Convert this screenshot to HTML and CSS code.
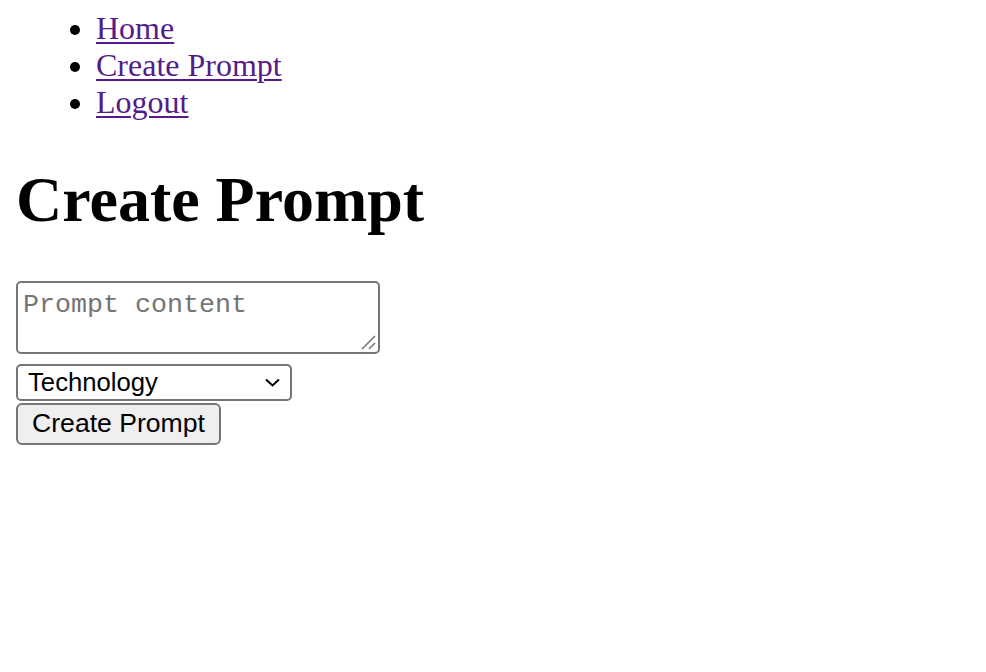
FILE: index.html
```html
<!DOCTYPE html>
<html lang="en">
<head>
<meta charset="utf-8">
<title>Create Prompt</title>
<link rel="stylesheet" href="styles.css">
</head>
<body>
<nav class="site-nav">
  <ul class="nav-list">
    <li class="nav-item"><a class="nav-link" href="#">Home</a></li>
    <li class="nav-item"><a class="nav-link" href="#">Create Prompt</a></li>
    <li class="nav-item"><a class="nav-link" href="#">Logout</a></li>
  </ul>
</nav>
<h1 class="page-title">Create Prompt</h1>
<form class="prompt-form">
  <textarea class="prompt-content" placeholder="Prompt content"></textarea>
  <select class="prompt-category">
    <option>Technology</option>
    <option>Science</option>
    <option>Art</option>
  </select>
  <button class="submit-button" type="submit">Create Prompt</button>
</form>
</body>
</html>
```
FILE: styles.css
```css
html, body {
  background: #ffffff;
}
body {
  margin: 0;
  padding: 10px 16px 16px;
  font-family: "Liberation Serif", "Times New Roman", serif;
  font-size: 32px;
  color: #000000;
}
.nav-list {
  margin: 0;
  padding-left: 80px;
  list-style: disc;
  line-height: 1.15;
}
.nav-link {
  color: #551a8b;
  text-decoration: underline;
  text-decoration-thickness: 2px;
  text-underline-offset: 3px;
}
.page-title {
  font-size: 64px;
  font-weight: bold;
  line-height: 1.15;
  margin: 43px 0 44px;
}
.prompt-form {
  display: flex;
  flex-direction: column;
  align-items: flex-start;
}
.prompt-content {
  box-sizing: border-box;
  width: 364px;
  height: 73px;
  margin: 0 0 10px;
  padding: 7px 5px 4px;
  border: 2px solid #767676;
  border-radius: 5px;
  font-family: "Liberation Mono", "Courier New", monospace;
  font-size: 26.67px;
  line-height: 1.15;
  color: #000000;
  resize: none;
  background: #ffffff url("data:image/svg+xml;utf8,<svg xmlns='http://www.w3.org/2000/svg' width='16' height='16'><path d='M2 15 L15 2 M9 15 L15 9' stroke='%23777' stroke-width='1.6' fill='none'/></svg>") no-repeat right 2px bottom 2px;
}
.prompt-content::placeholder {
  color: #757575;
}
.prompt-category {
  box-sizing: border-box;
  appearance: none;
  -webkit-appearance: none;
  width: 276px;
  height: 37px;
  margin: 0 0 2px;
  padding: 0 0 0 10px;
  border: 2px solid #767676;
  border-radius: 5px;
  font-family: "Liberation Sans", Arial, sans-serif;
  font-size: 25.7px;
  color: #000000;
  background: #ffffff url("data:image/svg+xml;utf8,<svg xmlns='http://www.w3.org/2000/svg' width='15' height='9'><path d='M1 1.5 L7.5 7.5 L14 1.5' stroke='%23000' stroke-width='2' fill='none'/></svg>") no-repeat right 10px center;
}
.submit-button {
  box-sizing: border-box;
  width: 205px;
  height: 42px;
  margin: 0;
  padding: 0 10px;
  border: 2px solid #767676;
  border-radius: 6px;
  background: #efefef;
  font-family: "Liberation Sans", Arial, sans-serif;
  font-size: 26.6px;
  color: #000000;
}
```
